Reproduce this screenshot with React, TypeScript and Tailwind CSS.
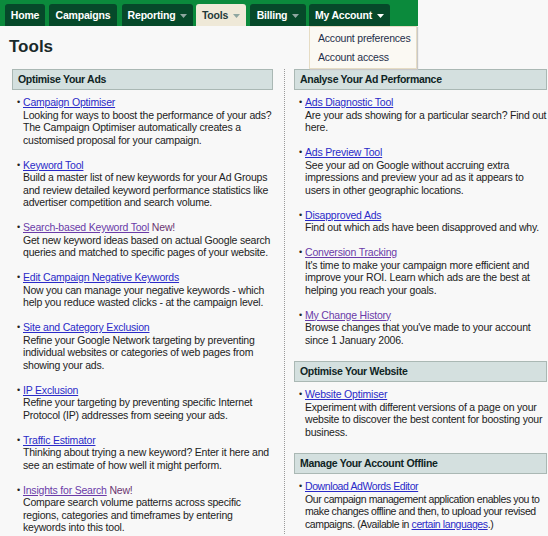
import React from 'react'

type Tool = {
  name: string
  desc: React.ReactNode
  visited?: boolean
  isNew?: boolean
}

const LEFT: Tool[] = [
  {
    name: 'Campaign Optimiser',
    desc: 'Looking for ways to boost the performance of your ads? The Campaign Optimiser automatically creates a customised proposal for your campaign.',
  },
  {
    name: 'Keyword Tool',
    desc: 'Build a master list of new keywords for your Ad Groups and review detailed keyword performance statistics like advertiser competition and search volume.',
  },
  {
    name: 'Search-based Keyword Tool',
    visited: true,
    isNew: true,
    desc: 'Get new keyword ideas based on actual Google search queries and matched to specific pages of your website.',
  },
  {
    name: 'Edit Campaign Negative Keywords',
    desc: 'Now you can manage your negative keywords - which help you reduce wasted clicks - at the campaign level.',
  },
  {
    name: 'Site and Category Exclusion',
    desc: 'Refine your Google Network targeting by preventing individual websites or categories of web pages from showing your ads.',
  },
  {
    name: 'IP Exclusion',
    desc: 'Refine your targeting by preventing specific Internet Protocol (IP) addresses from seeing your ads.',
  },
  {
    name: 'Traffic Estimator',
    desc: 'Thinking about trying a new keyword? Enter it here and see an estimate of how well it might perform.',
  },
  {
    name: 'Insights for Search',
    visited: true,
    isNew: true,
    desc: 'Compare search volume patterns across specific regions, categories and timeframes by entering keywords into this tool.',
  },
]

const PERFORMANCE: Tool[] = [
  { name: 'Ads Diagnostic Tool', desc: 'Are your ads showing for a particular search? Find out here.' },
  {
    name: 'Ads Preview Tool',
    desc: 'See your ad on Google without accruing extra impressions and preview your ad as it appears to users in other geographic locations.',
  },
  { name: 'Disapproved Ads', desc: 'Find out which ads have been disapproved and why.' },
  {
    name: 'Conversion Tracking',
    visited: true,
    desc: "It's time to make your campaign more efficient and improve your ROI. Learn which ads are the best at helping you reach your goals.",
  },
  {
    name: 'My Change History',
    visited: true,
    desc: "Browse changes that you've made to your account since 1 January 2006.",
  },
]

const WEBSITE: Tool[] = [
  {
    name: 'Website Optimiser',
    desc: 'Experiment with different versions of a page on your website to discover the best content for boosting your business.',
  },
]

const OFFLINE: Tool[] = [
  {
    name: 'Download AdWords Editor',
    desc: (
      <>
        Our campaign management application enables you to make changes offline and then, to upload your revised
        campaigns. (Available in <a className="text-[#2a2ac8] underline">certain languages</a>.)
      </>
    ),
  },
]

function Caret({ light }: { light?: boolean }) {
  return (
    <svg width="7" height="4" viewBox="0 0 7 4" className="ml-[5px] mt-[2px]">
      <path d="M0 0h7L3.5 4z" fill={light ? '#ffffff' : '#8fa6a0'} />
    </svg>
  )
}

function Tab({
  label,
  width,
  caret,
  active,
  light,
}: {
  label: string
  width: string
  caret?: boolean
  active?: boolean
  light?: boolean
}) {
  return (
    <div
      className={`${width} flex h-[22px] items-center justify-center whitespace-nowrap rounded-t-[3px] font-bold ${
        active ? 'bg-[#efe9d8] text-[#1f3a3a]' : 'bg-[#06492a] text-white'
      }`}
    >
      {label}
      {caret && <Caret light={light} />}
    </div>
  )
}

function SectionHeader({ title }: { title: string }) {
  return (
    <div className="flex h-[21px] items-center border border-[#aab8b4] bg-[#d4e0df] pl-[5px] font-bold tracking-[-0.3px] text-[#0f2424]">
      {title}
    </div>
  )
}

function ToolList({ tools, tight }: { tools: Tool[]; tight?: boolean }) {
  return (
    <ul className={`flex flex-col gap-[12.5px] pl-[5px] pt-[6px] ${tight ? 'tracking-[-0.4px]' : ''}`}>
      {tools.map((t) => (
        <li key={t.name} className="flex">
          <span className="w-[6px] shrink-0 text-[9px]">•</span>
          <div>
            <div>
              <a className={t.visited ? 'text-[#6a3ba8] underline' : 'text-[#2a2ac8] underline'}>{t.name}</a>
              {t.isNew && <span className="text-[#6b3570]"> New!</span>}
            </div>
            <div className="text-[#222]">{t.desc}</div>
          </div>
        </li>
      ))}
    </ul>
  )
}

export default function App() {
  return (
    <div className="relative h-[536px] w-[548px] overflow-hidden bg-[#f8f8f8] text-[10.5px] leading-[12.5px] tracking-[-0.2px] text-[#222] [font-family:'Liberation_Sans',Arial,sans-serif]">
      <div className="flex h-[26px] w-[418px] items-end bg-[#0b8a3c] pl-[5px]">
        <Tab label="Home" width="w-[40px]" />
        <div className="w-[4px]" />
        <Tab label="Campaigns" width="w-[68px]" />
        <div className="w-[5px]" />
        <Tab label="Reporting" width="w-[71px]" caret />
        <div className="w-[3px]" />
        <Tab label="Tools" width="w-[50px]" caret active />
        <div className="w-[4px]" />
        <Tab label="Billing" width="w-[56px]" caret />
        <div className="w-[3px]" />
        <Tab label="My Account" width="w-[81px]" caret light />
      </div>

      <div className="absolute left-[309px] top-[26px] flex w-[108px] flex-col whitespace-nowrap border border-[#e6dcc4] bg-[#fbf9f3] px-[8px] pb-[1px] pt-[2px] leading-[19px] text-[#1f2f4a] shadow-[1px_1px_1px_#c8c8c8]">
        <div>Account preferences</div>
        <div>Account access</div>
      </div>

      <h1 className="pl-[9px] pt-[12px] text-[17px] font-bold leading-[18px] tracking-normal text-[#1a2a2a]">Tools</h1>

      <div className="mt-[13px] flex pl-[12px]">
        <div className="w-[261px]">
          <SectionHeader title="Optimise Your Ads" />
          <ToolList tools={LEFT} />
        </div>
        <div className="ml-[11px] w-0 self-stretch border-l border-dotted border-[#9a9a9a]" />
        <div className="ml-[9px] w-[253px]">
          <SectionHeader title="Analyse Your Ad Performance" />
          <ToolList tools={PERFORMANCE} />
          <div className="mt-[15px]">
            <SectionHeader title="Optimise Your Website" />
            <ToolList tools={WEBSITE} />
          </div>
          <div className="mt-[15px]">
            <SectionHeader title="Manage Your Account Offline" />
            <ToolList tools={OFFLINE} tight />
          </div>
        </div>
      </div>
    </div>
  )
}
